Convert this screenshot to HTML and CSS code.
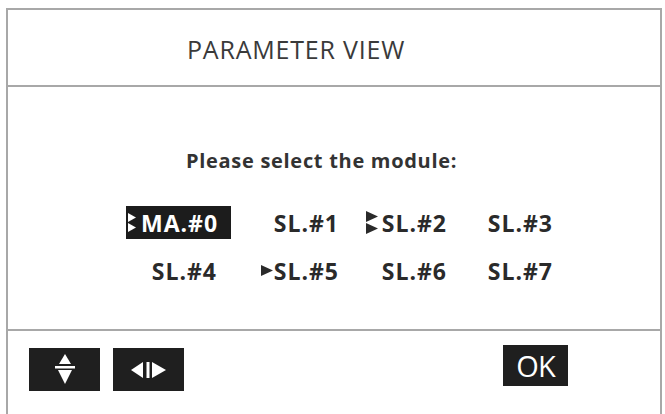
FILE: index.html
```html
<!DOCTYPE html>
<html>
<head>
<meta charset="utf-8">
<link rel="stylesheet" href="styles.css">
</head>
<body>
<div class="frame">
  <div class="header"><span class="title">PARAMETER VIEW</span></div>
  <div class="main">
    <div class="prompt">Please select the module:</div>
    <div class="grid">
      <div class="cell c1"><span class="item selected"><svg class="dbl" width="8" height="19" viewBox="0 0 8 19"><polygon points="0,0 8,4.5 0,9" fill="#fff"/><polygon points="0,10 8,14.5 0,19" fill="#fff"/></svg><span class="lbl">MA.#0</span></span></div>
      <div class="cell"><span class="item"><span class="lbl">SL.#1</span></span></div>
      <div class="cell"><span class="item"><svg class="dbl2" width="12" height="23" viewBox="0 0 12 23"><polygon points="0,0 12,5.5 0,11" fill="#2a2a2a"/><polygon points="0,12 12,17.5 0,23" fill="#2a2a2a"/></svg><span class="lbl">SL.#2</span></span></div>
      <div class="cell"><span class="item"><span class="lbl">SL.#3</span></span></div>
      <div class="cell c1"><span class="item shift"><span class="lbl">SL.#4</span></span></div>
      <div class="cell"><span class="item"><svg class="sgl" width="12" height="11" viewBox="0 0 12 11"><polygon points="0,0 12,5.5 0,11" fill="#2a2a2a"/></svg><span class="lbl">SL.#5</span></span></div>
      <div class="cell"><span class="item"><span class="lbl">SL.#6</span></span></div>
      <div class="cell"><span class="item"><span class="lbl">SL.#7</span></span></div>
    </div>
  </div>
  <div class="footer">
    <div class="btn">
      <svg width="22" height="32" viewBox="0 0 22 32"><polygon points="11,0 17,10 5,10" fill="#fff"/><rect x="1" y="12" width="20" height="2.5" fill="#fff"/><polygon points="4,16 18,16 11,30" fill="#fff"/></svg>
    </div>
    <div class="btn">
      <svg width="36" height="18" viewBox="0 0 36 18"><polygon points="0,9 12,1 12,17" fill="#fff"/><rect x="15.5" y="1" width="3" height="16" fill="#fff"/><polygon points="21,1 35,9 21,17" fill="#fff"/></svg>
    </div>
    <div class="ok">OK</div>
  </div>
</div>
</body>
</html>
```
FILE: styles.css
```css
html, body {
  margin: 0;
  padding: 0;
  background: #fff;
  overflow: hidden;
}
.frame {
  margin: 8px 0 0 6px;
  width: 652px;
  height: 420px;
  border: 2px solid #a8a8a8;
  border-bottom: none;
  display: flex;
  flex-direction: column;
  font-family: "Open Sans", "Liberation Sans", sans-serif;
  color: #2a2a2a;
}
.header {
  height: 75px;
  border-bottom: 2px solid #a8a8a8;
  display: flex;
  align-items: center;
  padding-left: 179px;
}
.title {
  font-size: 25px;
  font-weight: 400;
  color: #3a3a3a;
  letter-spacing: 0.8px;
  padding-top: 2px;
}
.main {
  height: 244px;
  border-bottom: 2px solid #a8a8a8;
  padding-top: 62px;
  box-sizing: border-box;
}
.prompt {
  font-size: 20px;
  font-weight: 700;
  line-height: 24px;
  padding-left: 178px;
  letter-spacing: 0.7px;
  color: #333;
}
.grid {
  margin-top: 33px;
  margin-left: 113px;
  display: grid;
  grid-template-columns: 110px 108px 108px 106px;
  grid-auto-rows: 33px;
  row-gap: 15px;
}
.cell {
  display: flex;
  justify-content: flex-end;
  align-items: center;
}
.item {
  display: flex;
  align-items: center;
  font-size: 23px;
  font-weight: 700;
  letter-spacing: 1px;
  color: #2a2a2a;
  height: 33px;
}
.item.selected {
  background: #1c1c1c;
  color: #fff;
  padding: 0 0 0 2px;
  width: 105px;
  box-sizing: border-box;
}
.item.shift {
  margin-right: 14px;
}
.dbl {
  margin-right: 5px;
}
.dbl2 {
  margin-right: 4px;
}
.sgl {
  margin-right: 1px;
}
.footer {
  display: flex;
  align-items: flex-start;
  padding: 17px 92px 0 21px;
}
.btn {
  width: 71px;
  height: 43px;
  background: #1f1f1f;
  display: flex;
  align-items: center;
  justify-content: center;
  margin-right: 13px;
}
.ok {
  margin-left: auto;
  margin-top: -3px;
  width: 65px;
  height: 41px;
  background: #1f1f1f;
  color: #fff;
  font-size: 29px;
  font-weight: 400;
  display: flex;
  align-items: center;
  justify-content: center;
  letter-spacing: -1px;
}
```
